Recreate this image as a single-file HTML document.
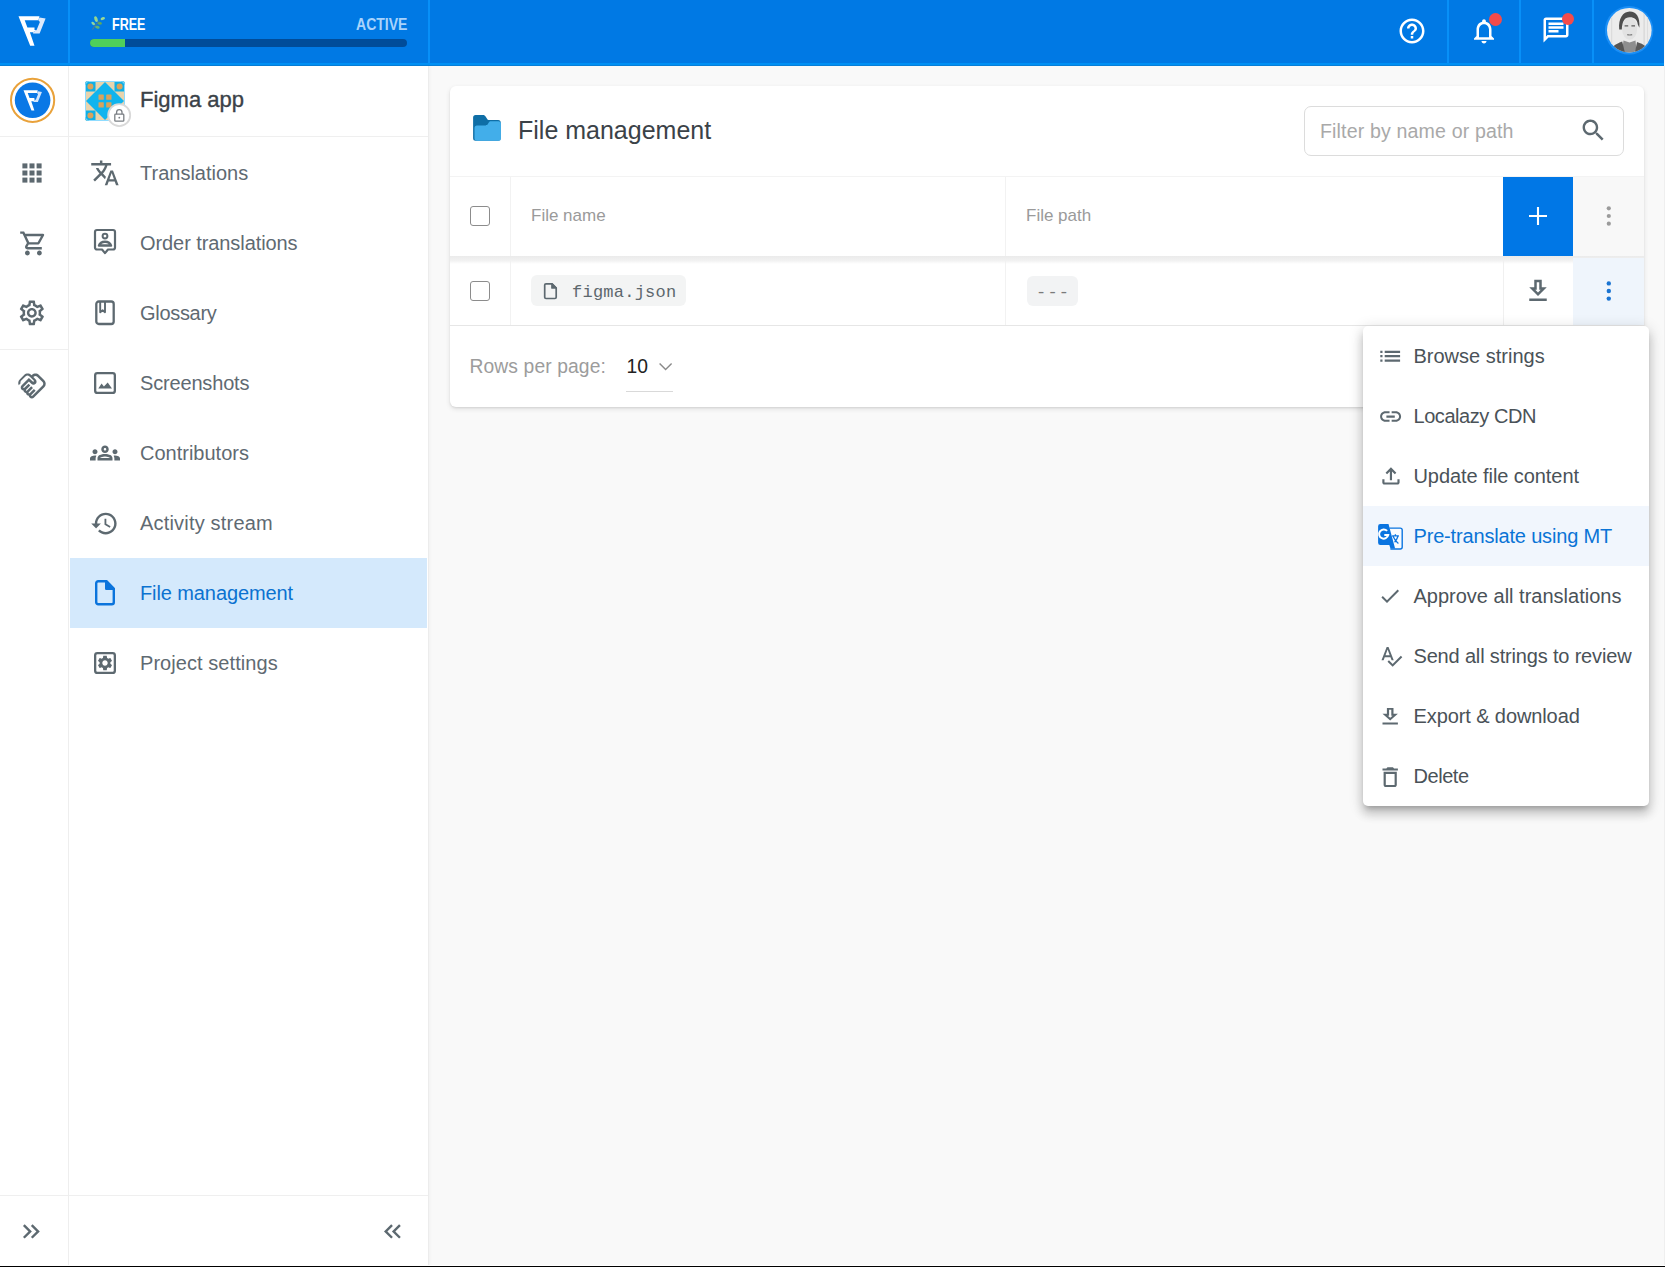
<!DOCTYPE html>
<html><head><meta charset="utf-8">
<style>
*{box-sizing:border-box;margin:0;padding:0}
html,body{width:1665px;height:1267px;overflow:hidden;background:#f9f9f9;font-family:"Liberation Sans",sans-serif}
.abs{position:absolute}
#hdr{position:absolute;left:0;top:0;width:1664px;height:66px;background:#0079e4;border-bottom:1px solid #067fd8;box-shadow:inset 0 -2px 0 #0090f4}
.vdiv{position:absolute;top:0;width:1.6px;height:63px;background:#0890f8}
#rail{position:absolute;left:0;top:66px;width:69px;height:1200px;background:#fff;border-right:1px solid #efefef}
#side{position:absolute;left:69px;top:66px;width:360px;height:1200px;background:#fff;border-right:1px solid #ececec;box-shadow:1px 0 3px rgba(0,0,0,.03)}
.item{position:absolute;left:0;width:358px;height:70px}
.item .lbl{position:absolute;left:71px;top:26px;line-height:20px;font-size:20px;color:#5f6a72;white-space:nowrap}
.item svg{position:absolute;margin-top:-0.8px}
.sel::before{content:"";position:absolute;left:1px;top:1px;width:357px;height:70px;background:#d4e9fc}
.sel .lbl{color:#0b72d0}
#card{position:absolute;left:450px;top:86px;width:1194px;height:321px;background:#fff;border-radius:6px;box-shadow:0 2px 5px rgba(0,0,0,.11),0 1px 2px rgba(0,0,0,.07)}
#menu{position:absolute;left:1363px;top:326px;width:286px;height:480px;background:#fff;border-radius:5px;box-shadow:0 5px 5px -3px rgba(0,0,0,.2),0 8px 10px 1px rgba(0,0,0,.14),0 3px 14px 2px rgba(0,0,0,.12)}
.mi{position:absolute;left:0;width:286px;height:60px}
.mi .lbl{position:absolute;left:50.5px;top:20px;line-height:20px;font-size:20px;color:#4a5258;white-space:nowrap}
.mi svg{position:absolute}
#bot{position:absolute;left:0;top:1266px;width:1665px;height:1px;background:#000}
</style></head><body>
<div id="hdr">
  <svg class="abs" style="left:0;top:0" width="68" height="64" viewBox="0 0 68 64">
    <polygon fill="#fff" points="18.5,16.2 39.5,16.2 38.4,20.3 24.7,20.3 27.4,27.4 34.5,27.4 34.5,29.9 36.6,29.9 33.1,32.2 29.9,32.2 34.5,45.7 30.2,45.7"/>
    <polygon fill="#dde9fb" points="39.5,17.5 45.6,18.5 39.6,33.5 33.1,33.5 33.1,32.2 36.6,29.9 39.9,22.1 38.4,20.3"/>
  </svg>
  <div class="vdiv" style="left:68px"></div>
  <svg class="abs" style="left:88px;top:12px" width="22" height="22" viewBox="0 0 22 22">
    <path d="M4.6 17.6 C6 14.5 8 12 11.5 9" stroke="#7a7a6a" stroke-width="0.9" fill="none"/>
    <ellipse cx="8" cy="7.1" rx="1.6" ry="3" fill="#95d68e" transform="rotate(-20 8 7.1)"/>
    <ellipse cx="14.8" cy="6.6" rx="2.3" ry="1.4" fill="#9ad993" transform="rotate(-25 14.8 6.6)"/>
    <ellipse cx="5.2" cy="11.4" rx="2.1" ry="1.3" fill="#8fd6a0" transform="rotate(40 5.2 11.4)"/>
    <ellipse cx="11.8" cy="11.4" rx="2" ry="1.4" fill="#5faa5a"/>
    <ellipse cx="9.4" cy="15.2" rx="2.3" ry="1.4" fill="#62b374" transform="rotate(15 9.4 15.2)"/>
  </svg>
  <div class="abs" style="left:112.3px;top:15.8px;font-size:16.5px;font-weight:bold;color:#fff;line-height:17px;transform:scaleX(0.76);transform-origin:0 0">FREE</div>
  <div class="abs" style="left:355.8px;top:15.8px;font-size:16.5px;font-weight:bold;color:#a9d3fb;line-height:17px;transform:scaleX(0.85);transform-origin:0 0">ACTIVE</div>
  <div class="abs" style="left:90px;top:39px;width:317px;height:8px;border-radius:4px;background:#004c99;overflow:hidden">
    <div style="width:35px;height:8px;background:#4fcf5b"></div>
  </div>
  <div class="vdiv" style="left:428px"></div>
  <!-- right icons -->
  <svg class="abs" style="left:1397px;top:16px" width="30" height="30" viewBox="0 0 24 24"><path fill="#fff" d="M11 18h2v-2h-2v2zm1-16C6.48 2 2 6.480 2 12s4.48 10 10 10 10-4.48 10-10S17.52 2 12 2zm0 18c-4.41 0-8-3.59-8-8s3.590-8 8-8 8 3.59 8 8-3.59 8-8 8zm0-14c-2.21 0-4 1.79-4 4h2c0-1.1.9-2 2-2s2 .9 2 2c0 2-3 1.75-3 5h2c0-2.25 3-2.5 3-5 0-2.21-1.79-4-4-4z"/></svg>
  <div class="vdiv" style="left:1447px"></div>
  <svg class="abs" style="left:1469px;top:16px" width="30" height="30" viewBox="0 0 24 24"><path fill="#fff" d="M12 22c1.1 0 2-.9 2-2h-4c0 1.1.89 2 2 2zm6-6v-5c0-3.07-1.64-5.64-4.5-6.32V4c0-.83-.67-1.5-1.5-1.5s-1.5.67-1.5 1.5v.68C7.63 5.36 6 7.92 6 11v5l-2 2v1h16v-1l-2-2zm-2 1H8v-6c0-2.48 1.51-4.5 4-4.5s4 2.02 4 4.5v6z"/></svg>
  <div class="abs" style="left:1489px;top:13px;width:13px;height:13px;border-radius:50%;background:#f44b4b"></div>
  <div class="vdiv" style="left:1519px"></div>
  <svg class="abs" style="left:1541px;top:15px" width="30" height="30" viewBox="0 0 24 24"><path fill="#fff" d="M20 2H4c-1.1 0-1.99.9-1.99 2L2 22l4-4h14c1.1 0 2-.9 2-2V4c0-1.1-.9-2-2-2zm0 14H5.17L4 17.17V4h16v12zM6 12h8v2H6zm0-3h12v2H6zm0-3h12v2H6z"/></svg>
  <div class="abs" style="left:1562px;top:13px;width:12px;height:12px;border-radius:50%;background:#f44b4b"></div>
  <div class="vdiv" style="left:1592px"></div>
  <svg class="abs" style="left:1605px;top:6px" width="49" height="49" viewBox="0 0 49 49">
    <defs><clipPath id="av"><circle cx="24.3" cy="24.2" r="22.3"/></clipPath></defs>
    <circle cx="24.1" cy="24.3" r="24.2" fill="#1b8ff6"/>
    <g clip-path="url(#av)">
      <rect width="49" height="49" fill="#ececec"/>
      <rect x="6" y="0" width="1.2" height="49" fill="#dcdcdc"/><rect x="38.5" y="0" width="1.2" height="49" fill="#d6d6d6"/><rect x="42" y="0" width="1" height="49" fill="#dedede"/>
      <path d="M16.5 49 L18.5 34.5 L24.5 36.5 L30.5 34.5 L32 49Z" fill="#8e8e8e"/>
      <ellipse cx="24.6" cy="22.5" rx="7.6" ry="11.2" fill="#e2e2e2"/>
      <path d="M14.2 23.5 C13.2 12.5 18 5.8 24.6 5.6 C31.2 5.5 35.2 10.5 34.4 21.8 L32.8 18.5 C32.3 13.6 29.2 11.2 24.6 11.3 C19.8 11.4 17.2 14.8 16.8 23.5Z" fill="#4e4e4e"/>
      <path d="M19.6 19.9h3.6M26.4 19.9h3.6" stroke="#5e5e5e" stroke-width="1.4"/>
      <path d="M22.2 28.6q2.5 .7 5 0" stroke="#7c7c7c" stroke-width="1.1" fill="none"/>
      <path d="M3 49 C5 42 9 38.5 17.2 35.5 L20.5 49Z" fill="#555"/>
      <path d="M46 49 C43.5 42 40 38.5 32 36 L29.5 49Z" fill="#5a5a5a"/>
    </g>
  </svg>
</div>

<div id="rail">
  <svg class="abs" style="left:10px;top:11px" width="46" height="46" viewBox="0 0 46 46">
    <circle cx="22.6" cy="23.3" r="21.6" fill="none" stroke="#e9a23b" stroke-width="2"/>
    <circle cx="22.6" cy="23.3" r="17.8" fill="#0a78e6"/>
    <g transform="translate(0.92,2.32) scale(0.68)">
    <polygon fill="#fff" points="18.5,16.2 39.5,16.2 38.4,20.3 24.7,20.3 27.4,27.4 34.5,27.4 34.5,29.9 36.6,29.9 33.1,32.2 29.9,32.2 34.5,45.7 30.2,45.7"/>
    <polygon fill="#d3e5fb" points="39.5,17.5 45.6,18.5 39.6,33.5 33.1,33.5 33.1,32.2 36.6,29.9 39.9,22.1 38.4,20.3"/>
    </g>
  </svg>
  <div class="abs" style="left:0;top:70px;width:68px;height:1px;background:#efefef"></div>
  <svg class="abs" style="left:22px;top:97px" width="20" height="20" viewBox="0 0 20 20" fill="#5d6970">
    <rect x="0.4" y="0.4" width="5" height="5"/><rect x="7.5" y="0.4" width="5" height="5"/><rect x="14.6" y="0.4" width="5" height="5"/>
    <rect x="0.4" y="7.5" width="5" height="5"/><rect x="7.5" y="7.5" width="5" height="5"/><rect x="14.6" y="7.5" width="5" height="5"/>
    <rect x="0.4" y="14.6" width="5" height="5"/><rect x="7.5" y="14.6" width="5" height="5"/><rect x="14.6" y="14.6" width="5" height="5"/>
  </svg>
  <svg class="abs" style="left:18.8px;top:162.6px" width="28.8" height="28.8" viewBox="0 0 24 24"><path fill="#5d6970" d="M15.55 13c.75 0 1.41-.41 1.75-1.030l3.58-6.490c.37-.66-.11-1.48-.87-1.48H5.21l-.94-2H1v2h2l3.6 7.59-1.35 2.44C4.52 15.37 5.48 17 7 17h12v-2H7l1.1-2h7.45zM6.16 6h12.15l-2.76 5H8.53L6.16 6zM7 18c-1.1 0-1.99.9-1.99 2S5.9 22 7 22s2-.9 2-2-.9-2-2-2zm10 0c-1.1 0-1.99.9-1.99 2s.89 2 1.99 2 2-.9 2-2-.9-2-2-2z"/></svg>
  <svg class="abs" style="left:17px;top:231.8px" width="29.7" height="29.7" viewBox="0 0 24 24"><path fill="#5d6970" d="M19.43 12.98c.04-.32.07-.64.07-.98 0-.34-.03-.66-.07-.98l2.11-1.65c.19-.15.24-.42.12-.64l-2-3.46c-.09-.16-.26-.25-.44-.25-.06 0-.12.01-.17.03l-2.49 1c-.52-.4-1.08-.73-1.69-.98l-.38-2.65C14.46 2.18 14.25 2 14 2h-4c-.25 0-.46.18-.49.42l-.38 2.65c-.61.25-1.170.59-1.69.98l-2.49-1c-.06-.02-.12-.03-.18-.03-.17 0-.34.09-.43.25l-2 3.46c-.13.22-.07.49.12.64l2.11 1.65c-.04.32-.07.65-.07.98 0 .33.03.66.07.98l-2.11 1.65c-.19.15-.24.42-.12.64l2 3.46c.09.16.26.25.44.25.06 0 .12-.01.17-.03l2.49-1c.52.4 1.08.73 1.69.98l.38 2.65c.03.24.24.42.49.42h4c.25 0 .46-.18.49-.42l.38-2.65c.61-.25 1.17-.59 1.69-.98l2.49 1c.06.02.12.03.18.03.17 0 .34-.09.43-.25l2-3.46c.12-.22.07-.49-.12-.64l-2.11-1.65zm-1.98-1.71c.04.31.05.52.05.73 0 .21-.02.43-.05.73l-.14 1.13.89.7 1.08.84-.7 1.21-1.27-.51-1.04-.42-.9.68c-.43.32-.84.56-1.25.73l-1.06.43-.16 1.13-.2 1.35h-1.4l-.19-1.35-.16-1.13-1.06-.43c-.43-.18-.83-.41-1.23-.71l-.91-.7-1.06.43-1.27.51-.7-1.21 1.08-.84.89-.7-.14-1.13c-.03-.31-.05-.54-.05-.74s.02-.43.05-.73l.14-1.13-.89-.7-1.08-.84.7-1.21 1.27.51 1.04.42.9-.68c.43-.32.84-.56 1.25-.73l1.06-.43.16-1.13.2-1.35h1.39l.19 1.35.16 1.13 1.06.43c.43.18.83.41 1.23.71l.91.7 1.06-.43 1.27-.51.7 1.21-1.07.85-.89.7.14 1.13zM12 8c-2.21 0-4 1.79-4 4s1.79 4 4 4 4-1.79 4-4-1.79-4-4-4zm0 6c-1.1 0-2-.9-2-2s.9-2 2-2 2 .9 2 2-.9 2-2 2z"/></svg>
  <div class="abs" style="left:0;top:283px;width:68px;height:1px;background:#efefef"></div>
  <svg class="abs" style="left:17.2px;top:304.8px" width="30" height="30" viewBox="0 0 24 24"><path fill="#5d6970" d="M12.22 19.85c-.18.18-.5.21-.71 0-.18-.18-.21-.5 0-.71l3.39-3.39-1.41-1.41-3.39 3.39c-.19.2-.51.19-.71 0-.21-.21-.18-.53 0-.71l3.39-3.39-1.41-1.41-3.39 3.39c-.18.18-.5.21-.71 0-.19-.19-.19-.51 0-.71l3.39-3.39-1.420-1.41-3.39 3.39c-.18.18-.5.21-.71 0-.19-.2-.19-.51 0-.71L9.52 8.4l1.87 1.86c.95.95 2.59.94 3.54 0 .98-.98.98-2.56 0-3.54l-1.86-1.86.28-.28c.78-.78 2.05-.78 2.83 0l4.24 4.24c.78.78.78 2.05 0 2.83l-8.2 8.2zm9.61-6.78c1.56-1.56 1.56-4.09 0-5.66l-4.24-4.24c-1.56-1.56-4.09-1.56-5.66 0l-.28.28-.28-.28c-1.56-1.56-4.09-1.56-5.66 0L2.17 6.71C.9 7.98.68 9.83 1.4 11.3l1.45-1.45c-.21-.75-.01-1.59.58-2.18l3.54-3.54c.78-.78 2.05-.78 2.83 0l3.56 3.56c.18.18.21.5 0 .71-.21.21-.53.18-.71 0L9.52 5.57l-5.8 5.79c-.98.97-.98 2.56 0 3.54.39.39.89.63 1.42.7.07.52.3 1.02.7 1.42.4.4.9.63 1.42.7.07.52.3 1.02.7 1.42.4.4.9.63 1.42.7.07.54.31 1.03.7 1.42.47.47 1.1.73 1.77.73.67 0 1.3-.26 1.77-.73l8.21-8.19z"/></svg>
  <div class="abs" style="left:0;top:1129px;width:68px;height:1px;background:#efefef"></div>
  <svg class="abs" style="left:17.3px;top:1150.8px" width="28.8" height="28.8" viewBox="0 0 24 24"><path fill="#5d6970" d="M6.41 6 5 7.41 9.58 12 5 16.59 6.41 18l6-6z"/><path fill="#5d6970" d="M13 6l-1.41 1.41L16.17 12l-4.58 4.59L13 18l6-6z"/></svg>
</div>
<div id="side">
  <svg class="abs" style="left:16px;top:15px" width="40" height="40" viewBox="0 0 40 40">
    <defs><clipPath id="pc"><rect x="0" y="0" width="40" height="40" rx="3"/></clipPath></defs>
    <g clip-path="url(#pc)">
      <rect width="40" height="40" fill="#e9d4ad"/>
      <rect x="0" y="0" width="10.5" height="10.5" fill="#10b0e6"/><rect x="29.5" y="0" width="10.5" height="10.5" fill="#10b0e6"/><rect x="0" y="29.5" width="10.5" height="10.5" fill="#10b0e6"/><rect x="29.5" y="29.5" width="10.5" height="10.5" fill="#10b0e6"/>
      <polygon points="20,1 39,20 20,39 1,20" fill="#10b4ee"/>
      <circle cx="5.4" cy="5.4" r="3" fill="#d9a35c"/><circle cx="34.6" cy="5.4" r="3" fill="#d9a35c"/><circle cx="5.4" cy="34.6" r="3" fill="#d9a35c"/>
      <rect x="13.5" y="13.5" width="5.3" height="5.3" rx="0.6" fill="#d9a35c"/><rect x="21.2" y="13.5" width="5.3" height="5.3" rx="0.6" fill="#d9a35c"/><rect x="13.5" y="21.2" width="5.3" height="5.3" rx="0.6" fill="#d9a35c"/><rect x="21.2" y="21.2" width="5.3" height="5.3" rx="0.6" fill="#d9a35c"/>
    </g>
    <rect x="0.5" y="0.5" width="39" height="39" rx="3" fill="none" stroke="#8fdcff" stroke-width="1"/>
  </svg>
  <svg class="abs" style="left:38px;top:37px" width="25" height="25" viewBox="0 0 25 25">
    <circle cx="12.2" cy="12.2" r="11" fill="#fff" stroke="#d9d9d9" stroke-width="1.8"/>
    <path d="M9.6 11.2V9.3a2.7 2.7 0 0 1 5.4 0v1.9" fill="none" stroke="#7a7f84" stroke-width="1.3"/>
    <rect x="7.8" y="11.2" width="9" height="7" rx="0.8" fill="none" stroke="#7a7f84" stroke-width="1.3"/>
    <circle cx="12.3" cy="14.7" r="0.9" fill="#7a7f84"/>
  </svg>
  <div class="abs" style="left:71px;top:22.7px;font-size:22px;line-height:22px;color:#3b4248;-webkit-text-stroke:0.35px #3b4248;white-space:nowrap">Figma app</div>
  <div class="abs" style="left:0;top:70px;width:359px;height:1px;background:#efefef"></div>
  <div class="item" style="top:71px"><svg style="left:20.96px;top:21.900000000000006px" width="29.76" height="29.76" viewBox="0 -960 960 960"><path fill="#5d6970" d="m476-80 182-480h84L924-80h-84l-43-122H603L560-80h-84ZM160-200l-56-56 202-202q-35-35-63.5-80T190-640h84q20 39 40 68t48 58q33-33 68.5-92.5T484-720H40v-80h280v-80h80v80h280v80H564q-21 72-63 148t-83 116l96 98-30 82-122-125-202 201Zm468-72h144l-72-204-72 204Z"/></svg><div class="lbl">Translations</div></div>
  <div class="item" style="top:141px"><svg style="left:24px;top:22px" width="24" height="28" viewBox="0 0 24 28" fill="none" stroke="#5d6970" stroke-width="2.2" stroke-linejoin="round"><path d="M4 2h16a2 2 0 0 1 2 2v15.5a2 2 0 0 1-2 2h-5l-3 3.6-3-3.6H4a2 2 0 0 1-2-2V4a2 2 0 0 1 2-2z"/><circle cx="12" cy="8.1" r="2.4" stroke-width="2"/><path d="M6 17.6c.8-2.5 3.2-3.8 6-3.8s5.2 1.3 6 3.8z" stroke-width="2.5"/></svg><div class="lbl" style="letter-spacing:-0.08px">Order translations</div></div>
  <div class="item" style="top:211px"><svg style="left:25px;top:23px" width="22" height="28" viewBox="0 0 22 28" fill="none" stroke="#5d6970" stroke-width="2.3" stroke-linejoin="round"><rect x="2.3" y="2.5" width="17.4" height="22.5" rx="2.5"/><path d="M6.2 3v10.2l2.4-2 2.4 2V3" stroke-width="1.9"/></svg><div class="lbl" style="letter-spacing:-0.3px">Glossary</div></div>
  <div class="item" style="top:281px"><svg style="left:24px;top:25px" width="24" height="24" viewBox="0 0 24 24" fill="none" stroke="#5d6970" stroke-width="2.3"><rect x="2.15" y="2.15" width="19.7" height="19.7" rx="2.2"/><path d="M5.3 17.6 8.6 12.6 10.9 15.4 14.7 11.6 19 17.6z" fill="#5d6970" stroke="none"/></svg><div class="lbl" style="letter-spacing:-0.17px">Screenshots</div></div>
  <div class="item" style="top:351px"><svg style="left:21.2px;top:22.100000000000023px" width="30" height="30" viewBox="0 0 24 24"><path fill="#5d6970" d="M4 13c1.1 0 2-.9 2-2s-.9-2-2-2-2 .9-2 2 .9 2 2 2zm1.13 1.1c-.37-.06-.74-.1-1.13-.1-.99 0-1.93.21-2.78.58C.48 14.9 0 15.62 0 16.43V18h4.5v-1.61c0-.83.23-1.61.63-2.29zM20 13c1.1 0 2-.9 2-2s-.9-2-2-2-2 .9-2 2 .9 2 2 2zm4 3.43c0-.81-.48-1.53-1.22-1.85-.85-.37-1.79-.58-2.78-.58-.39 0-.76.04-1.13.1.4.68.63 1.46.63 2.29V18H24v-1.57zm-7.76-2.78c-1.17-.52-2.61-.9-4.24-.9-1.63 0-3.07.39-4.24.9C6.68 14.13 6 15.21 6 16.39V18h12v-1.61c0-1.18-.68-2.26-1.76-2.74zM8.070 16c.09-.23.13-.39.91-.69.97-.38 1.99-.56 3.02-.56s2.05.18 3.02.56c.77.3.81.46.91.69H8.07zM12 8c.55 0 1 .45 1 1s-.45 1-1 1-1-.45-1-1 .45-1 1-1m0-2c-1.66 0-3 1.34-3 3s1.34 3 3 3 3-1.34 3-3-1.34-3-3-3z"/></svg><div class="lbl">Contributors</div></div>
  <div class="item" style="top:421px"><svg style="left:21.4px;top:22.399999999999977px" width="29.04" height="29.04" viewBox="0 0 24 24"><path fill="#5d6970" d="M13 3c-4.97 0-9 4.03-9 9H1l3.89 3.89.07.14L9 12H6c0-3.87 3.13-7 7-7s7 3.13 7 7-3.13 7-7 7c-1.93 0-3.68-.79-4.94-2.06l-1.42 1.42C8.27 19.990 10.51 21 13 21c4.97 0 9-4.03 9-9s-4.03-9-9-9zm-1 5v5l4.28 2.54.72-1.21-3.5-2.08V8H12z"/></svg><div class="lbl" style="letter-spacing:0.19px">Activity stream</div></div>
  <div class="item sel" style="top:491px"><svg style="left:25px;top:23px" width="22" height="28" viewBox="0 0 22 28" fill="none" stroke="#0b74dc" stroke-width="2.4" stroke-linejoin="round"><path d="M4.2 2.2h8l7.6 7.6v13.5a2 2 0 0 1-2 2H4.2a2 2 0 0 1-2-2V4.2a2 2 0 0 1 2-2z"/><path d="M12.2 2.2v7.6h7.6z" fill="#0b74dc"/></svg><div class="lbl" style="letter-spacing:-0.1px">File management</div></div>
  <div class="item" style="top:561px"><svg style="left:24px;top:25px" width="24" height="24" viewBox="0 0 24 24" fill="none" stroke="#5d6970" stroke-width="2.3"><rect x="2.15" y="2.15" width="19.7" height="19.7" rx="2.2"/><g transform="translate(3,3) scale(0.75)"><path stroke="none" fill="#5d6970" d="M19.14 12.94c.04-.3.06-.61.06-.94 0-.32-.02-.64-.07-.94l2.03-1.58c.18-.14.23-.41.12-.61l-1.92-3.32c-.12-.22-.37-.29-.59-.22l-2.39.96c-.5-.38-1.03-.7-1.62-.94l-.36-2.54c-.04-.24-.24-.41-.48-.41h-3.84c-.24 0-.43.17-.47.41l-.36 2.54c-.59.24-1.13.57-1.62.94l-2.39-.96c-.22-.08-.47 0-.59.22L2.74 8.87c-.12.21-.08.47.12.61l2.03 1.58c-.05.3-.09.63-.09.94s.02.64.07.94l-2.03 1.58c-.18.14-.23.41-.12.61l1.92 3.32c.12.22.37.29.59.22l2.39-.96c.5.38 1.03.7 1.62.94l.36 2.54c.05.24.24.41.48.41h3.84c.24 0 .44-.17.47-.41l.36-2.54c.59-.24 1.13-.56 1.62-.94l2.39.96c.22.08.47 0 .59-.22l1.92-3.32c.12-.22.07-.47-.12-.61l-2.01-1.58zM12 15.6c-1.98 0-3.6-1.62-3.6-3.6s1.62-3.6 3.6-3.6 3.6 1.62 3.6 3.6-1.62 3.6-3.6 3.6z"/></g></svg><div class="lbl" style="letter-spacing:0.06px">Project settings</div></div>
  <div class="abs" style="left:0;top:1129px;width:359px;height:1px;background:#efefef"></div>
  <svg class="abs" style="left:308.7px;top:1150.8px" width="28.8" height="28.8" viewBox="0 0 24 24"><path fill="#5d6970" d="M17.59 18 19 16.59 14.42 12 19 7.41 17.59 6l-6 6z"/><path fill="#5d6970" d="M11 18l1.41-1.41L7.83 12l4.58-4.59L11 6l-6 6z"/></svg>
</div>

<div id="card"></div>
<div class="abs" style="left:450px;top:176px;width:1194px;height:1px;background:#f3f3f3"></div>
<svg class="abs" style="left:466px;top:108px" width="42" height="40" viewBox="0 0 42 40">
  <path d="M9.6 7.1h7.5c1.2 0 1.9.6 2.5 1.5l1.6 2.3c.4.6.9 1.1 1.8 1.1h9.2a2.5 2.5 0 0 1 2.5 2.5v15.7a2.5 2.5 0 0 1-2.5 2.5H9.6a2.5 2.5 0 0 1-2.5-2.5V9.6a2.5 2.5 0 0 1 2.5-2.5z" fill="#0f6ea6"/>
  <path d="M11 17.4h8.6c1 0 1.6-.4 2.1-1.2l1.1-1.6c.5-.8 1-1.3 2-1.3h7.6a2.5 2.5 0 0 1 2.5 2.5v14.4a2.5 2.5 0 0 1-2.5 2.5H11a2.5 2.5 0 0 1-2.5-2.5V19.9a2.5 2.5 0 0 1 2.5-2.5z" fill="#42aeea"/>
</svg>
<div class="abs" style="left:518px;top:117.8px;font-size:25px;line-height:25px;color:#3b4248;white-space:nowrap">File management</div>
<div class="abs" style="left:1304px;top:106px;width:320px;height:50px;border:1px solid #dcdcdc;border-radius:7px"></div>
<div class="abs" style="left:1320px;top:121.9px;font-size:19.6px;letter-spacing:0.14px;line-height:19.6px;color:#a9a9a9;white-space:nowrap">Filter by name or path</div>
<svg class="abs" style="left:1578.9px;top:116.4px" width="28.8" height="28.8" viewBox="0 0 24 24"><path fill="#5d6970" d="M15.5 14h-.79l-.28-.27C15.41 12.59 16 11.11 16 9.5 16 5.91 13.09 3 9.5 3S3 5.91 3 9.5 5.91 16 9.5 16c1.61 0 3.09-.59 4.23-1.57l.27.28v.79l5 4.99L20.49 19l-4.99-5zm-6 0C7.01 14 5 11.99 5 9.5S7.01 5 9.5 5 14 7.01 14 9.5 11.99 14 9.5 14z"/></svg>
<!-- table header -->
<div class="abs" style="left:470px;top:206px;width:20px;height:20px;border:1.5px solid #8c8c8c;border-radius:3px"></div>
<div class="abs" style="left:510px;top:177px;width:1px;height:149px;background:#f2f2f2"></div>
<div class="abs" style="left:531px;top:206.5px;font-size:17px;line-height:17px;color:#9a9a9a;white-space:nowrap">File name</div>
<div class="abs" style="left:1005px;top:177px;width:1px;height:149px;background:#f2f2f2"></div>
<div class="abs" style="left:1026px;top:206.5px;font-size:17px;line-height:17px;color:#9a9a9a;white-space:nowrap">File path</div>
<div class="abs" style="left:1573px;top:177px;width:71px;height:79px;background:#f8f8f8"></div>
<div class="abs" style="left:1503px;top:177px;width:70px;height:79px;background:#0077e6"></div>
<svg class="abs" style="left:1528px;top:206px" width="20" height="20" viewBox="0 0 20 20"><path d="M10 1v18M1 10h18" stroke="#fff" stroke-width="2.1"/></svg>
<svg class="abs" style="left:1603px;top:203px" width="12" height="26" viewBox="0 0 12 26" fill="#9b9b9b"><circle cx="5.8" cy="5.3" r="2.1"/><circle cx="5.8" cy="13" r="2.1"/><circle cx="5.8" cy="20.7" r="2.1"/></svg>
<div class="abs" style="left:450px;top:256px;width:1194px;height:8px;background:linear-gradient(#ebebeb,#f1f1f1 55%,rgba(245,245,245,0))"></div>
<!-- row -->
<div class="abs" style="left:1573px;top:258px;width:71px;height:68px;background:#eff5fc"></div>

<div class="abs" style="left:1503px;top:258px;width:1px;height:68px;background:#f0f0f0"></div>
<div class="abs" style="left:470px;top:281px;width:20px;height:20px;border:1.5px solid #8c8c8c;border-radius:3px"></div>
<div class="abs" style="left:531px;top:275px;width:155px;height:31px;background:#f3f4f4;border-radius:6px"></div>
<svg class="abs" style="left:542px;top:281px" width="18" height="20" viewBox="0 0 18 20" fill="none" stroke="#5d6970" stroke-width="1.7" stroke-linejoin="round"><path d="M4 2.8h6l4.2 4.2v9.2a1.3 1.3 0 0 1-1.3 1.3H4a1.3 1.3 0 0 1-1.3-1.3V4.1A1.3 1.3 0 0 1 4 2.8z"/><path d="M10 2.8v4.2h4.2z" fill="#5d6970"/></svg>
<div class="abs" style="left:572px;top:284px;font-family:'Liberation Mono',monospace;font-size:17px;letter-spacing:0.24px;line-height:17px;color:#5d676d;white-space:nowrap">figma.json</div>
<div class="abs" style="left:1027px;top:276px;width:51px;height:30px;background:#f2f3f4;border-radius:6px"></div>
<div class="abs" style="left:1027px;top:284px;width:51px;text-align:center;font-family:'Liberation Mono',monospace;font-size:17px;line-height:17px;color:#7a7a7a;white-space:nowrap;letter-spacing:1.2px;text-indent:1.2px">---</div>
<svg class="abs" style="left:1523px;top:276.25px" width="30" height="30" viewBox="0 0 24 24"><path fill="#5d6970" d="M19 9h-4V3H9v6H5l7 7 7-7zm-8 2V5h2v6h1.17L12 13.17 9.83 11H11zm-6 7h14v2H5z"/></svg>
<svg class="abs" style="left:1603px;top:278px" width="12" height="26" viewBox="0 0 12 26" fill="#1a74d2"><circle cx="5.8" cy="5.4" r="2.2"/><circle cx="5.8" cy="13" r="2.2"/><circle cx="5.8" cy="20.6" r="2.2"/></svg>
<div class="abs" style="left:450px;top:325px;width:1194px;height:1px;background:#e6e6e6"></div>
<!-- footer -->
<div class="abs" style="left:469.5px;top:357.4px;font-size:19.3px;letter-spacing:0.1px;line-height:19.3px;color:#9c9c9c;white-space:nowrap">Rows per page:</div>
<div class="abs" style="left:626.5px;top:357.4px;font-size:19.3px;line-height:19.3px;color:#222;white-space:nowrap">10</div>
<svg class="abs" style="left:657px;top:360px" width="17" height="13" viewBox="0 0 17 13"><path d="M2.6 3.4 8.6 9.6 14.6 3.4" fill="none" stroke="#8a8a8a" stroke-width="1.4"/></svg>
<div class="abs" style="left:626px;top:391px;width:47px;height:1px;background:#d9d9d9"></div>

<div id="menu">
  <div class="mi" style="top:0px;"><svg style="left:14.30px;top:16.90px" width="26.4" height="26.4" viewBox="0 0 24 24"><path fill="#5d6970" d="M3 13h2v-2H3v2zm0 4h2v-2H3v2zm0-8h2V7H3v2zm4 4h14v-2H7v2zm0 4h14v-2H7v2zM7 7v2h14V7H7z"/></svg><div class="lbl" style="">Browse strings</div></div>
  <div class="mi" style="top:60px;"><svg style="left:14.90px;top:18.45px" width="25.2" height="25.2" viewBox="0 0 24 24"><path fill="#5d6970" d="M3.9 12c0-1.71 1.39-3.1 3.1-3.1h4V7H7c-2.76 0-5 2.24-5 5s2.24 5 5 5h4v-1.9H7c-1.71 0-3.1-1.39-3.1-3.1zM8 13h8v-2H8v2zm9-6h-4v1.9h4c1.71 0 3.1 1.39 3.1 3.1s-1.39 3.1-3.1 3.1h-4V17h4c2.76 0 5-2.24 5-5s-2.24-5-5-5z"/></svg><div class="lbl" style="letter-spacing:-0.45px">Localazy CDN</div></div>
  <div class="mi" style="top:120px;"><svg style="left:14.80px;top:17.20px" width="25.9" height="25.9" viewBox="0 0 24 24"><path fill="#5d6970" d="M18 15v3H6v-3H4v3c0 1.1.9 2 2 2h12c1.1 0 2-.9 2-2v-3h-2zM7 9l1.41 1.41L11 7.830V16h2V7.83l2.59 2.58L17 9l-5-5-5 5z"/></svg><div class="lbl" style="letter-spacing:-0.07px">Update file content</div></div>
  <div class="mi" style="top:180px;background:#f1f6fd;"><svg style="left:14.00px;top:17.00px" width="28" height="28" viewBox="0 0 28 28">
    <path d="M12.3 5.1h10.9a2 2 0 0 1 2 2v16.9a2 2 0 0 1-2 2H13.4" fill="#f8fbff" stroke="#0a74e0" stroke-width="1.4"/>
    <path d="M3.3 1h8.2l6.6 24.6h-4.6l-1.2-3.7H3.3a2.2 2.2 0 0 1-2.2-2.2V3.2A2.2 2.2 0 0 1 3.3 1z" fill="#0a74e0"/>
    <path d="M10.1 7.9A4.6 4.6 0 1 0 11.2 12.1H7.3" fill="none" stroke="#fff" stroke-width="2"/>
    <path d="M15.1 12.8h6.8M18.4 11.2v1.6M16 13.2c1.3 3 3 5.4 5.4 7.2M21 13.2c-.9 2.6-2 4.5-3.4 6" fill="none" stroke="#0a74e0" stroke-width="1.3"/>
  </svg><div class="lbl" style="color:#0a74d6;letter-spacing:-0.17px">Pre-translate using MT</div></div>
  <div class="mi" style="top:240px;"><svg style="left:15.40px;top:18.40px" width="24" height="24" viewBox="0 0 24 24"><path fill="#5d6970" d="M9 16.17 4.83 12l-1.42 1.41L9 19 21 7l-1.41-1.41z"/></svg><div class="lbl" style="">Approve all translations</div></div>
  <div class="mi" style="top:300px;"><svg style="left:15.50px;top:18.30px" width="24.3" height="24.3" viewBox="0 0 24 24"><path fill="#5d6970" d="M12.45 16h2.09L9.43 3H7.57L2.46 16h2.09l1.12-3h5.64l1.14 3zm-6.02-5L8.5 5.48 10.57 11H6.43zm15.16.59-8.09 8.09L9.83 16l-1.41 1.41 5.09 5.09L23 13l-1.41-1.41z"/></svg><div class="lbl" style="letter-spacing:-0.17px">Send all strings to review</div></div>
  <div class="mi" style="top:360px;"><svg style="left:14.40px;top:18.90px" width="26.4" height="23.3" viewBox="0 0 24 24" preserveAspectRatio="none"><path fill="#5d6970" d="M19 9h-4V3H9v6H5l7 7 7-7zm-8 2V5h2v6h1.17L12 13.17 9.83 11H11zm-6 7h14v2H5z"/></svg><div class="lbl" style="letter-spacing:-0.1px">Export &amp; download</div></div>
  <div class="mi" style="top:420px;"><svg style="left:14.40px;top:18.10px" width="26.4" height="26.4" viewBox="0 0 24 24"><path fill="#5d6970" d="M16 9v10H8V9h8m-1.5-6h-5l-1 1H5v2h14V4h-3.5l-1-1zM18 7H6v12c0 1.1.9 2 2 2h8c1.1 0 2-.9 2-2V7z"/></svg><div class="lbl" style="letter-spacing:-0.46px">Delete</div></div>
</div>
<div class="abs" style="left:1664px;top:66px;width:1px;height:1200px;background:#efefef"></div>
<div class="abs" style="left:0;top:1265px;width:1665px;height:1px;background:#fff"></div>
<div id="bot"></div>
</body></html>
